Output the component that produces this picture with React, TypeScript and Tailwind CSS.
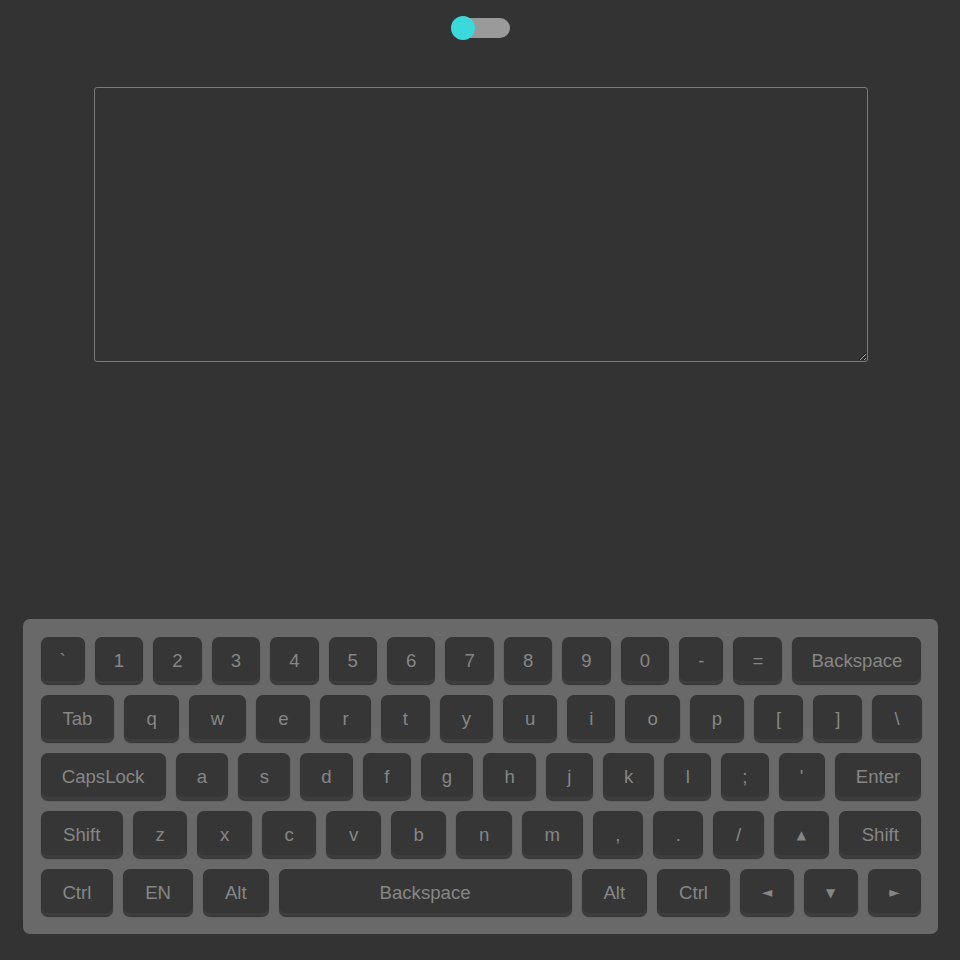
import React from "react";

type K = { label: string; wide?: boolean; arrow?: boolean; side?: boolean };

const rows: K[][] = [
  ["`", "1", "2", "3", "4", "5", "6", "7", "8", "9", "0", "-", "=", "Backspace"].map((l) => ({ label: l })),
  ["Tab", "q", "w", "e", "r", "t", "y", "u", "i", "o", "p", "[", "]", "\\"].map((l) => ({ label: l })),
  ["CapsLock", "a", "s", "d", "f", "g", "h", "j", "k", "l", ";", "'", "Enter"].map((l) => ({ label: l })),
  [
    ...["Shift", "z", "x", "c", "v", "b", "n", "m", ",", ".", "/"].map((l) => ({ label: l })),
    { label: "▲", arrow: true },
    { label: "Shift" },
  ],
  [
    { label: "Ctrl" },
    { label: "EN" },
    { label: "Alt" },
    { label: "Backspace", wide: true },
    { label: "Alt" },
    { label: "Ctrl" },
    { label: "◄", arrow: true, side: true },
    { label: "▼", arrow: true },
    { label: "►", arrow: true, side: true },
  ],
];

function Key({ k }: { k: K }) {
  return (
    <div
      className={
        (k.wide ? "flex-none w-[293px] " : "flex-auto ") +
        "h-[47px] px-[4px] rounded-[7px] bg-[#363636] flex items-center justify-center whitespace-nowrap text-[#868686] shadow-[inset_0_-3px_0_rgba(255,255,255,0.035),0_1px_1px_rgba(0,0,0,0.5)] " +
        (k.arrow ? "font-['DejaVu_Sans',sans-serif]" : "text-[18.6px]")
      }
    >
      {k.arrow ? (
        <span
          className={
            "inline-flex w-[10px] justify-center " + (k.side ? "text-[14px]" : "text-[12px]")
          }
        >
          {k.label}
        </span>
      ) : (
        k.label
      )}
    </div>
  );
}

export default function App() {
  return (
    <div className="h-[960px] overflow-hidden bg-[#333333] flex flex-col items-center font-['Liberation_Sans',Arial,sans-serif]">
      <div className="mt-[18px] ml-[3px] relative w-[57px] h-[20px] rounded-full bg-[#9a9a9a]">
        <div className="absolute left-[-2px] top-[-2px] w-[24px] h-[24px] rounded-full bg-[#3bd8dc]" />
      </div>
      <textarea
        className="mt-[49px] ml-[1px] w-[774px] h-[275px] bg-transparent border border-[#7a7a7a] rounded-[3px] text-[#ccc] outline-none p-2"
      />
      <div className="mt-[257px] w-[915px] h-[315px] rounded-[7px] bg-[#696969] pt-[18px] pb-[18px] pl-[18px] pr-[16px] flex flex-col gap-[11px]">
        {rows.map((r, i) => (
          <div key={i} className="flex gap-[10px]">
            {r.map((k, j) => (
              <Key key={j} k={k} />
            ))}
          </div>
        ))}
      </div>
    </div>
  );
}
